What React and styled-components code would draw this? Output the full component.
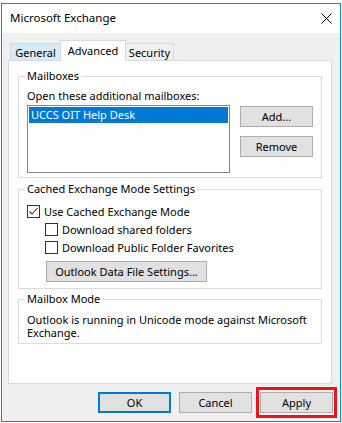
import React from 'react';
import styled, { createGlobalStyle } from 'styled-components';

const Global = createGlobalStyle`
  html, body { margin: 0; padding: 0; background: #ffffff; }
  body {
    font-family: "Noto Sans", "Open Sans", sans-serif;
    font-size: 11px;
    color: #000;
  }
  * { box-sizing: border-box; }
`;

const Screen = styled.div`
  width: 342px;
  height: 423px;
  padding: 3px 1px 0 1px;
  overflow: hidden;
`;

const Window = styled.div`
  width: 340px;
  height: 419px;
  border: 1px solid #1883d7;
  background: #f0f0f0;
  display: flex;
  flex-direction: column;
`;

const TitleBar = styled.div`
  height: 29px;
  flex: none;
  background: #fff;
  display: flex;
  align-items: center;
  justify-content: space-between;
  padding: 0 8px 1px 8px;
`;

const Title = styled.div`
  font-size: 11.5px;
  line-height: 16px;
`;

const Body = styled.div`
  flex: 1;
  padding: 7px 8px 0 6px;
  display: flex;
  flex-direction: column;
`;

const TabStrip = styled.div`
  height: 20px;
  display: flex;
  align-items: flex-end;
  padding-left: 2px;
`;

const Tab = styled.div`
  position: relative;
  width: ${p => p.$w}px;
  height: ${p => (p.$active ? 21 : 17)}px;
  margin-left: ${p => (p.$first ? 0 : -1)}px;
  margin-bottom: ${p => (p.$active ? -1 : 0)}px;
  z-index: ${p => (p.$active ? 2 : 1)};
  border: 1px solid ${p => (p.$hot ? '#c5dbee' : '#d9d9d9')};
  border-bottom: none;
  background: ${p => (p.$active ? '#fff' : p.$hot ? '#d8eaf9' : '#f0f0f0')};
  display: flex;
  align-items: center;
  justify-content: center;
  line-height: 16px;
  padding-top: ${p => (p.$active ? 0 : 1)}px;
`;

const Panel = styled.div`
  width: 324px;
  height: 324px;
  flex: none;
  background: #fff;
  border: 1px solid #d9d9d9;
  padding: 7px 9px 0 9px;
  display: flex;
  flex-direction: column;
`;

const Group = styled.fieldset`
  margin: ${p => p.$mt || 0}px 0 0 0;
  padding: 0 8px ${p => p.$pb || 4}px 8px;
  border: 1px solid #dcdcdc;
  min-width: 0;
`;

const Legend = styled.legend`
  padding: 0 2px;
  margin-left: -2px;
  line-height: 16px;
`;

const Label = styled.div`
  line-height: 16px;
  margin-top: ${p => p.$mt || 0}px;
`;

const ListRow = styled.div`
  display: flex;
  gap: 10px;
  margin-top: 1px;
`;

const ListBox = styled.div`
  width: 203px;
  height: 68px;
  border: 1px solid #828790;
  background: #fff;
  padding: 1px;
`;

const ListItem = styled.div`
  height: 16px;
  line-height: 16px;
  padding-left: 2px;
  background: ${p => (p.$selected ? '#0078d7' : 'transparent')};
  color: ${p => (p.$selected ? '#fff' : '#000')};
`;

const ButtonCol = styled.div`
  display: flex;
  flex-direction: column;
  gap: 9px;
  padding-top: 1px;
`;

const Button = styled.button`
  width: ${p => p.$w || 73}px;
  height: 21px;
  flex: none;
  margin: ${p => p.$m || 0};
  padding: 0;
  font-family: inherit;
  font-size: 11px;
  color: #000;
  background: #e1e1e1;
  border: ${p => (p.$default ? '2px solid #0078d7' : '1px solid #adadad')};
  line-height: 16px;
  display: flex;
  align-items: center;
  justify-content: center;
`;

const CheckRow = styled.div`
  height: 18px;
  display: flex;
  align-items: center;
  gap: 4px;
  padding-left: ${p => p.$indent || 0}px;
  margin-top: ${p => p.$mt || 0}px;
`;

const Box = styled.span`
  width: 13px;
  height: 13px;
  flex: none;
  border: 1px solid #333;
  background: #fff;
  display: flex;
  align-items: center;
  justify-content: center;
`;

const Text = styled.p`
  margin: ${p => p.$mt || 0}px 0 0 0;
  line-height: 13px;
  padding-right: 4px;
`;

const ButtonRow = styled.div`
  display: flex;
  justify-content: flex-end;
  gap: 8px;
  margin-top: 8px;
  margin-right: -1px;
`;

const Highlight = styled.div`
  border: 3px solid #e8141e;
  padding: 2px 1px;
  margin: -5px -4px;
  display: flex;
`;

const Check = ({ checked }) => (
  <Box>
    {checked && (
      <svg width="11" height="11" viewBox="0 0 11 11">
        <path d="M1.5 5.5 L4 8 L9.5 2" fill="none" stroke="#333" strokeWidth="1.1" />
      </svg>
    )}
  </Box>
);

const CloseIcon = () => (
  <svg width="11" height="11" viewBox="0 0 11 11">
    <path d="M0.5 0.5 L10.5 10.5 M10.5 0.5 L0.5 10.5" stroke="#000" strokeWidth="1" fill="none" />
  </svg>
);

export default function App() {
  return (
    <>
      <Global />
      <Screen>
        <Window>
          <TitleBar>
            <Title>Microsoft Exchange</Title>
            <CloseIcon />
          </TitleBar>
          <Body>
            <TabStrip>
              <Tab $first $hot $w={51}>General</Tab>
              <Tab $active $w={66}>Advanced</Tab>
              <Tab $w={49}>Security</Tab>
            </TabStrip>
            <Panel>
              <Group $pb={4}>
                <Legend>Mailboxes</Legend>
                <Label $mt={4}>Open these additional mailboxes:</Label>
                <ListRow>
                  <ListBox>
                    <ListItem $selected>UCCS OIT Help Desk</ListItem>
                  </ListBox>
                  <ButtonCol>
                    <Button>Add...</Button>
                    <Button>Remove</Button>
                  </ButtonCol>
                </ListRow>
              </Group>
              <Group $mt={3} $pb={6}>
                <Legend>Cached Exchange Mode Settings</Legend>
                <CheckRow $mt={5}>
                  <Check checked />
                  <span>Use Cached Exchange Mode</span>
                </CheckRow>
                <CheckRow $indent={18}>
                  <Check />
                  <span>Download shared folders</span>
                </CheckRow>
                <CheckRow $indent={18}>
                  <Check />
                  <span>Download Public Folder Favorites</span>
                </CheckRow>
                <Button $w={161} $m="5px 0 0 19px">Outlook Data File Settings...</Button>
              </Group>
              <Group $mt={2} $pb={4}>
                <Legend>Mailbox Mode</Legend>
                <Text $mt={6}>Outlook is running in Unicode mode against Microsoft Exchange.</Text>
              </Group>
            </Panel>
            <ButtonRow>
              <Button $default>OK</Button>
              <Button>Cancel</Button>
              <Highlight>
                <Button>Apply</Button>
              </Highlight>
            </ButtonRow>
          </Body>
        </Window>
      </Screen>
    </>
  );
}
